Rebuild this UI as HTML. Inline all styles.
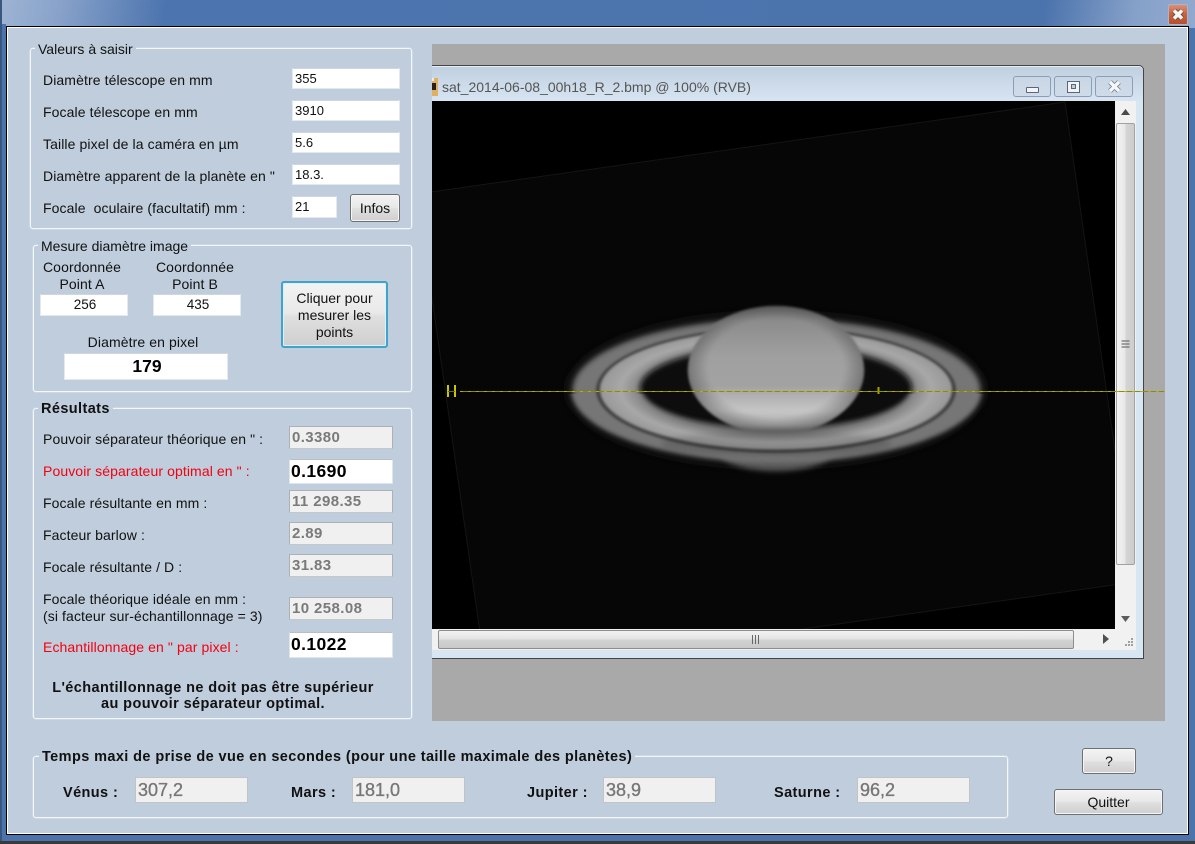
<!DOCTYPE html>
<html lang="fr"><head><meta charset="utf-8"><title>Calcul</title>
<style>
html,body{margin:0;padding:0}
body{width:1195px;height:844px;position:relative;overflow:hidden;background:#4b73ac;font-family:"Liberation Sans",sans-serif;color:#111;font-size:14px}
div{box-sizing:border-box}
.a,.l,.b,.i,.g,.d,.w,.v,.btn,.lg{position:absolute}
.l{white-space:nowrap;line-height:16px;letter-spacing:.1px}
.c{text-align:center}
.b{font-weight:bold;white-space:nowrap;line-height:16px;font-size:14.5px;letter-spacing:.4px}
.g{border:1px solid #f3f7fb;border-radius:3px;box-shadow:0 0 0 .5px #dbe4ee}
.lg{background:#bfcddc;white-space:nowrap;line-height:16px;padding:0 3px}
.i{background:#fff;border:1px solid #e4e9ef;border-top-color:#d0d6dd;line-height:19px;padding-left:2px;font-size:13px;color:#111}
.d{background:#f0f0f0;border:1px solid #adb0b4;border-bottom-color:#c4c8cc;color:#7a7a7a;font-weight:bold;font-size:15px;line-height:21px;padding-left:2px;letter-spacing:.4px}
.f{font-weight:normal;font-size:18px;line-height:24px;border-color:#c0c4c9;letter-spacing:0;color:#777;padding-left:2px;-webkit-text-stroke:.35px #777}
.v{background:#fff;border:1px solid #dfe5ec;border-top-color:#b9bfc6;color:#000;font-weight:bold;font-size:17.5px;line-height:22px;padding-left:1px;letter-spacing:.4px}
.btn{border:1px solid #6f6f6f;border-radius:3px;background:linear-gradient(#f3f3f3 0,#e9e9e9 47%,#dfdfdf 53%,#cfcfcf 100%);text-align:center;box-shadow:inset 0 0 0 1px #f6f6f6}
.w{top:76px;width:38px;height:21px;border:1px solid #8d9db8;border-radius:3px;background:linear-gradient(#c9d6e4,#cfdbe9)}
</style></head><body>
<!-- title bar -->
<div class="a" style="left:0;top:0;width:1195px;height:28px;background:linear-gradient(100deg,#9fb4d4 0,#88a2ca 60px,#4c74ae 165px,#4b73ac 1030px,#86a1c9 1120px,#93abd0 1195px)"></div>
<div class="a" style="left:0;top:0;width:2px;height:844px;background:#3a567f"></div>
<div class="a" style="left:2px;top:24px;width:4px;height:816px;background:#4b73ac"></div>
<div class="a" style="left:1168px;top:4px;width:20px;height:21px;background:linear-gradient(#dc8f75,#c8603c 50%,#b84f2c);border:1px solid #a9b6c9;border-radius:2px"></div>
<svg class="a" style="left:1168px;top:4px" width="20" height="21"><path d="M6 6.500 L14 14.500 M14 6.500 L6 14.500" stroke="#6a4a40" stroke-width="5.400"/><path d="M6 6.500 L14 14.500 M14 6.500 L6 14.500" stroke="#f6f6f6" stroke-width="3.600"/></svg>
<!-- dark bottom -->
<div class="a" style="left:0;top:841px;width:1195px;height:3px;background:#3a3a3a"></div>
<!-- client -->
<div class="a" style="left:6px;top:26px;width:1183px;height:809px;background:#bfcddc;border:1px solid #000;box-shadow:inset 0 0 0 1px #fff"></div>

<!-- Valeurs -->
<div class="g" style="left:30px;top:48px;width:382px;height:181px"></div>
<div class="lg" style="left:35px;top:41px">Valeurs à saisir</div>
<div class="l" style="left:43px;top:72px">Diamètre télescope en mm</div>
<div class="l" style="left:43px;top:104px">Focale télescope en mm</div>
<div class="l" style="left:43px;top:136px">Taille pixel de la caméra en µm</div>
<div class="l" style="left:43px;top:168px">Diamètre apparent de la planète en "</div>
<div class="l" style="left:43px;top:200px">Focale&nbsp; oculaire (facultatif) mm :</div>
<div class="i" style="left:292px;top:68px;width:108px;height:21px">355</div>
<div class="i" style="left:292px;top:100px;width:108px;height:21px">3910</div>
<div class="i" style="left:292px;top:132px;width:108px;height:21px">5.6</div>
<div class="i" style="left:292px;top:164px;width:108px;height:21px">18.3.</div>
<div class="i" style="left:292px;top:196px;width:45px;height:22px">21</div>
<div class="btn" style="left:350px;top:194px;width:50px;height:28px;line-height:26px">Infos</div>

<!-- Mesure -->
<div class="g" style="left:33px;top:245px;width:379px;height:147px"></div>
<div class="lg" style="left:38px;top:238px">Mesure diamètre image</div>
<div class="l c" style="left:22px;top:259px;width:120px">Coordonnée</div>
<div class="l c" style="left:22px;top:276px;width:120px">Point A</div>
<div class="l c" style="left:135px;top:259px;width:120px">Coordonnée</div>
<div class="l c" style="left:135px;top:276px;width:120px">Point B</div>
<div class="i c" style="left:40px;top:294px;width:88px;height:22px;line-height:20px;font-size:13.500px">256</div>
<div class="i c" style="left:153px;top:294px;width:88px;height:22px;line-height:20px;font-size:13.500px">435</div>
<div class="l c" style="left:63px;top:334px;width:160px">Diamètre en pixel</div>
<div class="i c" style="left:64px;top:353px;width:164px;height:27px;line-height:25px;font-weight:bold;font-size:17.500px;color:#000">179</div>
<div class="btn" style="left:281px;top:281px;width:107px;height:67px;border:2px solid #3fa3cb;box-shadow:inset 0 0 0 1px #dff1f8;line-height:17px;padding-top:7px">Cliquer pour<br>mesurer les<br>points</div>

<!-- Résultats -->
<div class="g" style="left:33px;top:408px;width:379px;height:311px"></div>
<div class="lg" style="left:38px;top:401px;font-weight:bold;font-size:14.500px;letter-spacing:.4px">Résultats</div>
<div class="l" style="left:43px;top:431px">Pouvoir séparateur théorique en " :</div>
<div class="l" style="left:43px;top:463px;color:#f5000f">Pouvoir séparateur optimal en " :</div>
<div class="l" style="left:43px;top:495px">Focale résultante en mm :</div>
<div class="l" style="left:43px;top:527px">Facteur barlow :</div>
<div class="l" style="left:43px;top:559px">Focale résultante / D :</div>
<div class="l" style="left:43px;top:591px">Focale théorique idéale en mm :</div>
<div class="l" style="left:43px;top:608px">(si facteur sur-échantillonnage = 3)</div>
<div class="l" style="left:43px;top:639px;color:#f5000f">Echantillonnage en " par pixel :</div>
<div class="d" style="left:289px;top:426px;width:104px;height:23px">0.3380</div>
<div class="v" style="left:289px;top:459px;width:104px;height:25px">0.1690</div>
<div class="d" style="left:289px;top:490px;width:104px;height:23px">11 298.35</div>
<div class="d" style="left:289px;top:522px;width:104px;height:23px">2.89</div>
<div class="d" style="left:289px;top:554px;width:104px;height:23px">31.83</div>
<div class="d" style="left:289px;top:597px;width:104px;height:23px">10 258.08</div>
<div class="v" style="left:289px;top:632px;width:104px;height:26px;line-height:23px">0.1022</div>
<div class="b c" style="left:13px;top:680px;width:400px">L'échantillonnage ne doit pas être supérieur</div>
<div class="b c" style="left:13px;top:696px;width:400px">au pouvoir séparateur optimal.</div>

<!-- MDI area -->
<div class="a" style="left:432px;top:44px;width:733px;height:677px;background:#a9a9a9"></div>
<div class="a" style="left:432px;top:65px;width:712px;height:594px;background:linear-gradient(#c0cfdf 0,#d8e5f3 36px);border:1px solid #444;border-left:0;border-top-right-radius:5px;box-shadow:inset 0 1px 0 #e8eef5"></div>
<svg class="a" style="left:432px;top:78px" width="7" height="19"><rect width="6" height="18" y="0" fill="#e0b060"/><rect y="5" width="4" height="7" fill="#2b2015"/><rect y="0" width="2" height="3" fill="#eee"/></svg>
<div class="a" style="left:442px;top:78px;font-size:14px;line-height:18px;color:#555;white-space:nowrap">sat_2014-06-08_00h18_R_2.bmp @ 100% (RVB)</div>
<div class="w" style="left:1013px"></div><div class="w" style="left:1054px"></div><div class="w" style="left:1095px"></div>
<div class="a" style="left:1026px;top:87px;width:13px;height:6px;background:#f2f4f7;border:1px solid #59677e;border-radius:1px"></div>
<div class="a" style="left:1067px;top:81px;width:13px;height:12px;background:#f2f4f7;border:1px solid #59677e"></div>
<div class="a" style="left:1071px;top:84px;width:5px;height:5px;background:#bfcddc;border:1px solid #59677e"></div>
<svg class="a" style="left:1107px;top:79px" width="15" height="15"><path d="M3 3 L12 12 M12 3 L3 12" stroke="#6c7a90" stroke-width="5"/><path d="M3 3 L12 12 M12 3 L3 12" stroke="#f6f7f9" stroke-width="3.400"/></svg>

<!-- image -->
<svg class="a" style="left:432px;top:101px" width="683" height="528" viewBox="432 101 683 528">
<defs>
<filter id="f1" x="-10%" y="-20%" width="120%" height="140%"><feGaussianBlur stdDeviation="2.800"/></filter>
<filter id="f2" x="-10%" y="-20%" width="120%" height="140%"><feGaussianBlur stdDeviation="1.300"/></filter>
<filter id="f4" x="-10%" y="-20%" width="120%" height="140%"><feGaussianBlur stdDeviation="2.800"/></filter>
<filter id="f3" x="-10%" y="-20%" width="120%" height="140%"><feGaussianBlur stdDeviation="7"/></filter>
<linearGradient id="gl" x1="0" y1="0" x2="0" y2="1"><stop offset="0" stop-color="#6e6e6e"/><stop offset=".12" stop-color="#8c8c8c"/><stop offset=".4" stop-color="#a0a0a0"/><stop offset=".62" stop-color="#a2a2a2"/><stop offset=".7" stop-color="#b0b0b0"/><stop offset=".82" stop-color="#c6c6c6"/><stop offset=".93" stop-color="#aeaeae"/><stop offset="1" stop-color="#868686"/></linearGradient>
<radialGradient id="gs" cx=".5" cy=".48" r=".55"><stop offset=".7" stop-color="#000" stop-opacity="0"/><stop offset="1" stop-color="#000" stop-opacity=".38"/></radialGradient>
<radialGradient id="br" cx=".5" cy=".5" r=".5"><stop offset=".7" stop-color="#6a6a6a"/><stop offset=".88" stop-color="#a8a8a8"/><stop offset="1" stop-color="#989898"/></radialGradient>
<g id="rings">
<ellipse cx="776.500" cy="390" rx="204" ry="71" fill="#767676" filter="url(#f1)"/>
<ellipse cx="776" cy="390" rx="180" ry="63" fill="#424242" filter="url(#f2)"/>
<ellipse cx="776" cy="389.500" rx="176" ry="60" fill="url(#br)" filter="url(#f2)"/>
</g>
<mask id="front" maskUnits="userSpaceOnUse" x="432" y="101" width="683" height="528">
<rect x="432" y="394" width="683" height="235" fill="#fff"/>
<ellipse cx="776" cy="388" rx="136" ry="42" fill="#000" filter="url(#f4)"/>
</mask>
</defs>
<rect x="432" y="101" width="683" height="528" fill="#000"/>
<polygon points="417,194 1065,102 1134,582 486,674" fill="#060606" stroke="#141414" stroke-width="1"/>
<ellipse cx="776" cy="390" rx="208" ry="76" fill="#141414" filter="url(#f3)"/>
<ellipse cx="776" cy="452" rx="56" ry="19" fill="#5a5a5a" filter="url(#f1)"/>
<use href="#rings"/>
<ellipse cx="776" cy="388" rx="136" ry="42" fill="#090909" filter="url(#f4)"/>
<ellipse cx="776" cy="370" rx="88" ry="64" fill="url(#gl)" filter="url(#f2)"/>
<ellipse cx="776" cy="370" rx="88" ry="64" fill="url(#gs)" filter="url(#f2)"/>
<g mask="url(#front)"><use href="#rings"/></g>
<ellipse cx="776" cy="444" rx="115" ry="13" fill="#000" opacity=".13" filter="url(#f1)"/>
</svg>

<!-- vertical scrollbar -->
<div class="a" style="left:1115px;top:101px;width:21px;height:528px;background:#f1f1f1"></div>
<div class="a" style="left:1116px;top:123px;width:19px;height:442px;border:1px solid #a2a2a2;border-radius:2px;background:linear-gradient(90deg,#f4f4f4,#e8e8e8 45%,#d4d4d4 55%,#cdcdcd)"></div>
<svg class="a" style="left:1115px;top:101px" width="21" height="528"><path d="M6 14 L15 14 L10.500 8 Z" fill="#4a4a4a"/><path d="M6 515 L15 515 L10.500 521 Z" fill="#5c5c5c"/><path d="M6.500 240h8M6.500 243h8M6.500 246h8" stroke="#555" stroke-width="1"/></svg>
<!-- horizontal scrollbar -->
<div class="a" style="left:432px;top:629px;width:704px;height:21px;background:#f1f1f1"></div>
<div class="a" style="left:438px;top:630px;width:636px;height:19px;border:1px solid #8d8d8d;border-radius:2px;background:linear-gradient(#f2f2f2,#e4e4e4 45%,#d2d2d2 55%,#c9c9c9)"></div>
<svg class="a" style="left:432px;top:629px" width="704" height="21"><path d="M320.500 6v9M323.500 6v9M326.500 6v9" stroke="#666" stroke-width="1"/><path d="M671 5 L671 15 L677 10 Z" fill="#505050"/><path d="M702 7h2v2h-2zM699 10h2v2h-2zM702 10h2v2h-2zM696 13h2v2h-2zM699 13h2v2h-2zM702 13h2v2h-2z" transform="translate(-3,2)" fill="#a0a0a0"/></svg>

<!-- measure line -->
<svg class="a" style="left:432px;top:380px" width="735" height="22">
<path d="M28 11.500H733" stroke="#7f8f14" stroke-width="1"/>
<path d="M28 11.500H733" stroke="#d0a000" stroke-width="1" stroke-dasharray="3 5"/>
<path d="M16 5v12M23 5v12" stroke="#c8c800" stroke-width="2"/><path d="M16 11.500h7" stroke="#6e6e00"/>
<path d="M446.500 7v7" stroke="#b39a00" stroke-width="2"/><path d="M443 11.500h8" stroke="#7ba000"/>
</svg>

<!-- Temps -->
<div class="g" style="left:33px;top:756px;width:975px;height:62px"></div>
<div class="lg" style="left:39px;top:749px;font-weight:bold;font-size:14.500px;letter-spacing:.4px">Temps maxi de prise de vue en secondes (pour une taille maximale des planètes)</div>
<div class="b" style="left:63px;top:785px">Vénus :</div>
<div class="b" style="left:291px;top:785px">Mars :</div>
<div class="b" style="left:527px;top:785px">Jupiter :</div>
<div class="b" style="left:774px;top:785px">Saturne :</div>
<div class="d f" style="left:135px;top:777px;width:113px;height:26px">307,2</div>
<div class="d f" style="left:352px;top:777px;width:113px;height:26px">181,0</div>
<div class="d f" style="left:603px;top:777px;width:113px;height:26px">38,9</div>
<div class="d f" style="left:857px;top:777px;width:113px;height:26px">96,2</div>
<div class="btn" style="left:1082px;top:748px;width:54px;height:26px;line-height:25px">?</div>
<div class="btn" style="left:1054px;top:789px;width:109px;height:26px;line-height:25px">Quitter</div>
</body></html>
